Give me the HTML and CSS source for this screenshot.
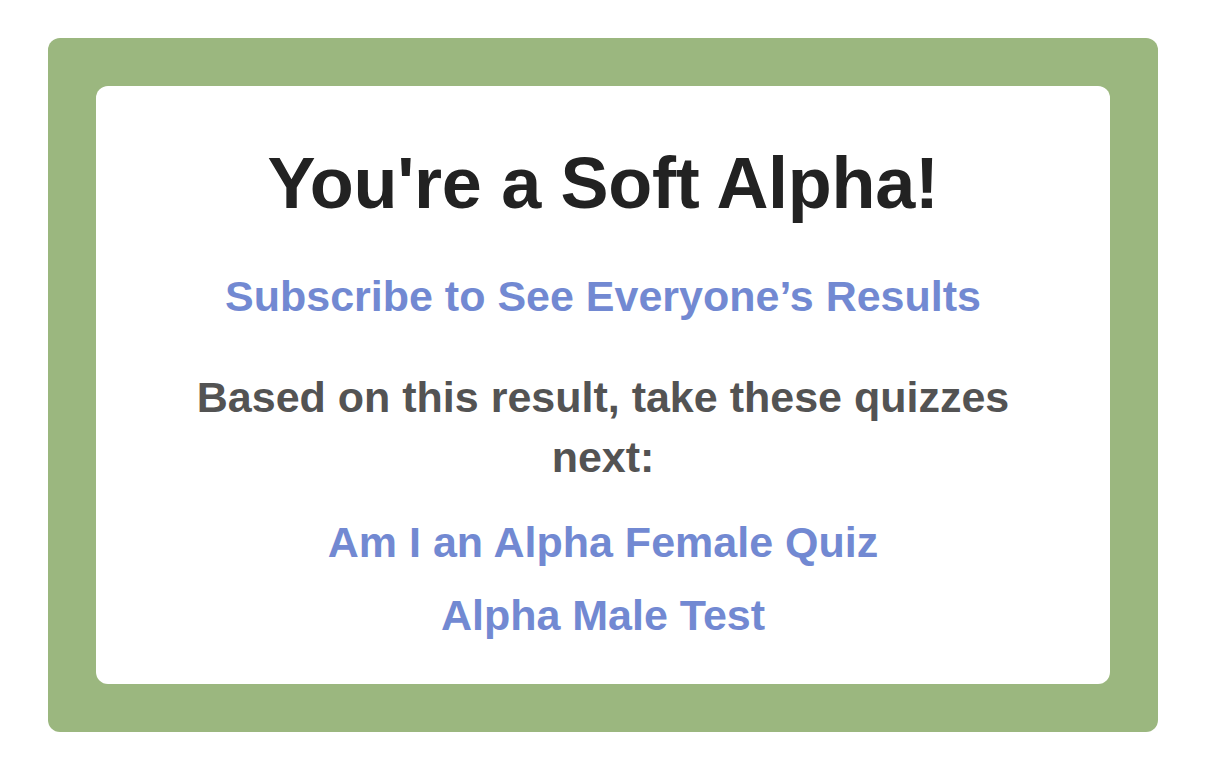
FILE: index.html
```html
<!DOCTYPE html>
<html lang="en">
<head>
<meta charset="utf-8">
<title>You're a Soft Alpha!</title>
<link rel="stylesheet" href="styles.css">
</head>
<body>
<div class="frame">
  <div class="card">
    <h1 class="title">You're a Soft Alpha!</h1>
    <a class="link subscribe" href="#">Subscribe to See Everyone’s Results</a>
    <p class="next">Based on this result, take these quizzes next:</p>
    <a class="link quiz first" href="#">Am I an Alpha Female Quiz</a>
    <a class="link quiz" href="#">Alpha Male Test</a>
  </div>
</div>
</body>
</html>
```
FILE: styles.css
```css
html, body {
  margin: 0;
  padding: 0;
  background: #ffffff;
}
body {
  font-family: "Liberation Sans", Arial, Helvetica, sans-serif;
  padding: 38px 48px 0 48px;
}
.frame {
  background: #9bb77f;
  border-radius: 12px;
  padding: 48px;
  height: 598px;
}
.card {
  background: #ffffff;
  border-radius: 12px;
  height: 598px;
  box-sizing: border-box;
  padding: 57px 60px 0;
  display: flex;
  flex-direction: column;
  align-items: center;
  text-align: center;
}
.title {
  margin: 0;
  font-size: 72px;
  line-height: 80px;
  font-weight: 700;
  color: #222222;
  letter-spacing: -0.3px;
}
.link {
  display: block;
  font-size: 43px;
  line-height: 50px;
  font-weight: 700;
  color: #7289d2;
  text-decoration: none;
}
.subscribe {
  margin-top: 48px;
}
.next {
  margin: 46px 0 0;
  font-size: 43px;
  line-height: 60px;
  font-weight: 700;
  color: #535353;
  max-width: 830px;
}
.quiz.first {
  margin-top: 30px;
}
.quiz {
  margin-top: 23px;
}
```
